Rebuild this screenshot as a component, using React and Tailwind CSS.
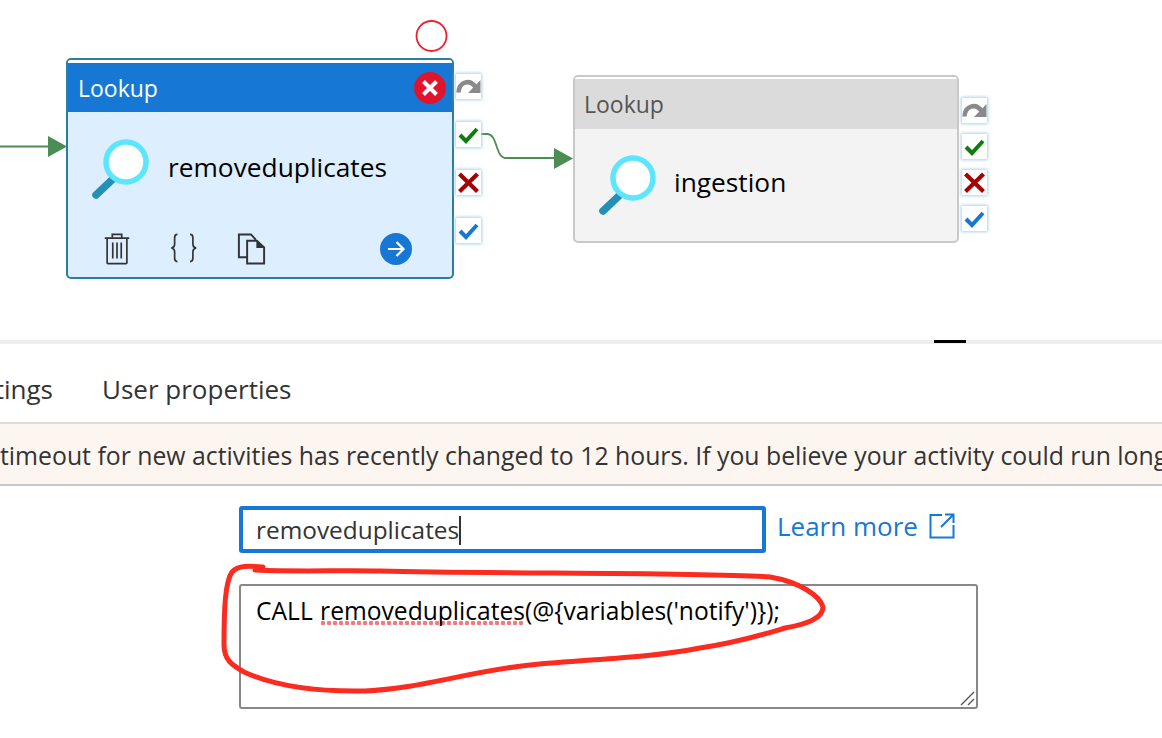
import React from 'react';

const fontClass = "font-['Open_Sans','Noto_Sans',sans-serif]";

const SkipIcon = () => (
    <svg width="25" height="25" viewBox="0 0 25 25">
        <path d="M2.500 18.500C3 8 13.500 4.500 19.500 13" fill="none" stroke="#8a8a8a" strokeWidth="4.500" />
        <path d="M24.500 6V19H12Z" fill="#8a8a8a" />
    </svg>
);

const CheckIcon = ({ color }) => (
    <svg width="25" height="25" viewBox="0 0 25 25">
        <path d="M4 13L10 19L21 7" fill="none" stroke={color} strokeWidth="4" />
    </svg>
);

const CrossIcon = () => (
    <svg width="25" height="25" viewBox="0 0 25 25">
        <path d="M3.500 4L21.500 21.500M21.500 4L3.500 21.500" fill="none" stroke="#a80000" strokeWidth="4.200" />
    </svg>
);

const Handle = ({ children }) => (
    <div className="w-[25px] h-[25px] bg-white shadow-[0_0_3px_1px_#a9d0f5]">{children}</div>
);

const Handles = ({ className }) => (
    <div className={`absolute flex flex-col ${className}`}>
        <Handle><SkipIcon /></Handle>
        <Handle><CheckIcon color="#107c10" /></Handle>
        <Handle><CrossIcon /></Handle>
        <Handle><CheckIcon color="#1678d4" /></Handle>
    </div>
);

const LookupIcon = () => (
    <svg width="58" height="62" viewBox="0 0 58 62" className="shrink-0">
        <path d="M5 56L24 38" stroke="#2490b5" strokeWidth="7.500" strokeLinecap="round" />
        <circle cx="35" cy="23" r="20" fill="white" stroke="#5ce6fd" strokeWidth="5.500" />
    </svg>
);

const TrashIcon = () => (
    <svg width="28" height="32" viewBox="0 0 28 34" fill="none" stroke="#333" strokeWidth="1.800">
        <path d="M1 5.500H27M9 5V1.500H19V5M3.500 6V31.500Q3.500 32.500 4.500 32.500H23.500Q24.500 32.500 24.500 31.500V6" />
        <path d="M9.500 10V27M14 10V27M18.500 10V27" />
    </svg>
);

const BracesIcon = () => (
    <svg width="30" height="30" viewBox="0 0 30 32" fill="none" stroke="#333" strokeWidth="1.800">
        <path d="M8 1.500Q5 1.500 5 5V12Q5 15.500 1.500 16Q5 16.500 5 20V27Q5 30.500 8 30.500" />
        <path d="M21.500 1.500Q24.500 1.500 24.500 5V12Q24.500 15.500 28 16Q24.500 16.500 24.500 20V27Q24.500 30.500 21.500 30.500" />
    </svg>
);

const CopyIcon = () => (
    <svg width="29" height="32" viewBox="0 0 29 33" fill="none" stroke="#333" strokeWidth="2">
        <path d="M10 25H1.500V1.500H14L19 7" />
        <path d="M10 8H20L27.500 15V31.500H10Z" fill="#ddeefe" />
        <path d="M20.500 8V14.500H27.500" fill="#333" />
    </svg>
);

const GoIcon = () => (
    <svg width="32" height="32" viewBox="0 0 32 32">
        <circle cx="16" cy="16" r="16" fill="#1678d4" />
        <path d="M8 16H23M16.500 9L23.500 16L16.500 23" fill="none" stroke="white" strokeWidth="2.200" />
    </svg>
);

const ErrorBadge = () => (
    <svg width="32" height="32" viewBox="0 0 32 32">
        <circle cx="16" cy="16" r="16" fill="#e0142c" />
        <path d="M9.500 9.500L22.500 22.500M22.500 9.500L9.500 22.500" stroke="white" strokeWidth="4" />
    </svg>
);

const ExternalIcon = () => (
    <svg width="26" height="26" viewBox="0 0 26 26" fill="none" stroke="#1678d4" strokeWidth="2">
        <path d="M13 2H1.500V24.500H24.500V12" />
        <path d="M12 14L24 2M16 1.500H24.500V10" />
    </svg>
);

const App = () => {
    return (
        <div className={`relative w-[1162px] h-[738px] overflow-hidden bg-white ${fontClass}`}>
            {/* pipeline canvas */}
            <div className="relative h-[340px]">
                <svg width="1162" height="340" className="absolute left-0 top-0">
                    <circle cx="431.500" cy="36" r="15" fill="none" stroke="#f0202c" strokeWidth="1.800" />
                    <path d="M0 146.500H50" stroke="#4c8c55" strokeWidth="2" />
                    <path d="M48 136L67 146.500L48 157Z" fill="#4c8c55" />
                    <path d="M480 134H487C498 134 495 158 506 158H556" fill="none" stroke="#4c8c55" strokeWidth="1.800" />
                    <path d="M554 148L573 158.500L554 169Z" fill="#4c8c55" />
                </svg>

                <div className="absolute left-[66px] top-[58px] w-[388px] h-[221px] flex flex-col border-2 border-[#2a7f9f] rounded-[5px] bg-[#ddeefe] overflow-hidden">
                    <div className="h-[3px] bg-white shrink-0" />
                    <div className="h-[49px] shrink-0 flex items-center justify-between pl-[10px] pr-[6px] bg-[#1678d4] text-white text-[23px]">
                        <span className="pt-[2px]">Lookup</span>
                        <ErrorBadge />
                    </div>
                    <div className="flex items-center gap-[19px] pl-[23px] pt-[27px]">
                        <LookupIcon />
                        <span className="mb-[4px] text-[26.300px] text-black">removeduplicates</span>
                    </div>
                    <div className="flex items-start pl-[35px] pt-[32px]">
                        <TrashIcon />
                        <div className="ml-[38px]"><BracesIcon /></div>
                        <div className="ml-[38px]"><CopyIcon /></div>
                        <div className="ml-[114px]"><GoIcon /></div>
                    </div>
                </div>
                <Handles className="left-[456px] top-[74px] gap-[23px]" />

                <div className="absolute left-[573px] top-[75px] w-[386px] h-[168px] flex flex-col border-2 border-[#c8c8c8] rounded-[5px] bg-[#f3f3f3] overflow-hidden">
                    <div className="h-[2px] bg-white shrink-0" />
                    <div className="h-[50px] shrink-0 flex items-center pl-[9px] bg-[#dbdbdb] text-[#555] text-[23px]">Lookup</div>
                    <div className="flex items-center gap-[18px] pl-[23px] pt-[26px]">
                        <LookupIcon />
                        <span className="mb-[6px] text-[26.300px] text-black">ingestion</span>
                    </div>
                </div>
                <Handles className="left-[962px] top-[98px] gap-[11px]" />
            </div>

            {/* properties panel */}
            <div className="relative h-1 bg-[#eeeeee]">
                <div className="absolute left-[934px] top-0 w-8 h-[3px] bg-black" />
            </div>
            <div className="relative h-[78px] text-[26px] text-[#333]">
                <span className="absolute right-[1109px] top-[26px]">tings</span>
                <span className="absolute left-[102px] top-[26px]">User properties</span>
            </div>
            <div className="h-16 flex items-center pt-[3px] border-t-2 border-b-2 border-t-[#ddd] border-b-[#c8c8c8] bg-[#fdf6f0] text-[24.800px] text-[#333] whitespace-nowrap overflow-hidden">
                timeout for new activities has recently changed to 12 hours. If you believe your activity could run longer than that
            </div>

            <div className="pl-[239px] pt-[20px]">
                <div className="flex items-center">
                    <div className="w-[527px] h-[47px] flex items-center pl-[13px] pt-[2px] border-4 border-[#1678d4] rounded-[3px] text-[24.400px] text-[#333]">
                        removeduplicates
                        <span className="w-[2px] h-[29px] bg-[#333]" />
                    </div>
                    <div className="flex items-center mb-[7px]">
                        <span className="ml-[11px] text-[26px] text-[#1678d4]">Learn more</span>
                        <div className="ml-[11px]"><ExternalIcon /></div>
                    </div>
                </div>
                <div className="relative w-[739px] h-[125px] mt-[31px] pl-[15px] pt-[7px] border-2 border-[#888] rounded-[3px] text-[24.600px] text-black">
                    CALL <span className="ml-[1px] bg-[radial-gradient(circle,#f8777c_2px,transparent_2.500px)] bg-[length:6px_6px] bg-repeat-x bg-[position:0_calc(100%-1px)]">removeduplicates</span>(@{'{'}variables('notify'){'}'});
                    <svg width="16" height="16" viewBox="0 0 16 16" className="absolute right-[1px] bottom-[1px]">
                        <path d="M2 15L15 2M9 15L15 9" stroke="#555" strokeWidth="1.400" />
                    </svg>
                </div>
            </div>

            {/* red hand drawn annotation */}
            <svg width="1162" height="738" className="absolute left-0 top-0 pointer-events-none">
                <path
                    d="M263 567C250 566 238 565 232 572C225 582 224 610 224 645C224 660 232 665 244 672C270 684 310 692 365 691C420 689 470 671 530 665C590 659 650 658 700 648C740 642 765 634 785 628C808 624 823 618 823 607C820 596 800 582 770 577C700 572 500 574 380 571C340 570 300 572 255 570"
                    fill="none"
                    stroke="#fb2b20"
                    strokeWidth="5"
                    strokeLinecap="round"
                />
            </svg>
        </div>
    );
};

export default App;
